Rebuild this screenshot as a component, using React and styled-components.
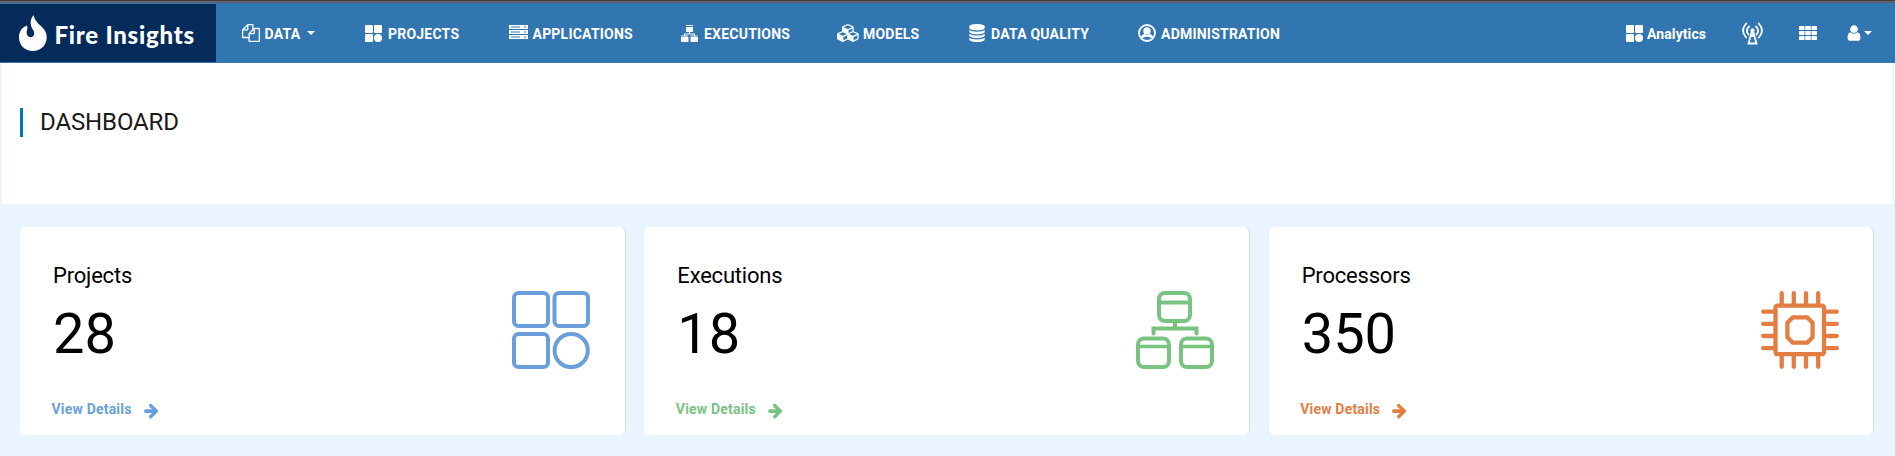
import React from 'react';
import styled, { createGlobalStyle } from 'styled-components';

const Global = createGlobalStyle`
  * { box-sizing: border-box; }
  body { margin: 0; background: #e9f4ff; font-family: Roboto, "Liberation Sans", sans-serif; color: #000; }
`;

const Page = styled.div`
  min-height: 456px;
  display: flex;
  flex-direction: column;
  border-top: 1px solid #3f3f42;
`;

const Navbar = styled.nav`
  height: 62px;
  flex: none;
  display: flex;
  align-items: stretch;
  background: #3276b1;
  border-top: 2px solid #656367;
`;

const Brand = styled.a`
  width: 216px;
  margin: 1px 0;
  padding-left: 19px;
  display: flex;
  align-items: center;
  gap: 7.5px;
  background: #052b5b;
  color: #fff;
`;

const BrandName = styled.span`
  padding-top: 3px;
  font: 900 24px/28px Lato, sans-serif;
  letter-spacing: 0.75px;
  white-space: nowrap;
`;

const Menu = styled.div`
  display: flex;
  align-items: center;
`;

const RightMenu = styled(Menu)`
  margin-left: auto;
  padding-right: 23px;
`;

const Item = styled.a`
  display: flex;
  align-items: center;
  margin-left: ${p => p.$before}px;
  gap: ${p => p.$gap ?? 6}px;
  height: 24px;
  color: #fff;
  font-size: 14px;
  font-weight: 700;
  line-height: 24px;
  white-space: nowrap;
  svg { flex: none; display: block; }
`;

const Label = styled.span`
  width: ${p => p.$w}px;
  padding-top: 2px;
  letter-spacing: ${p => p.$track ?? 0.22}px;
`;

const Caret = styled.i`
  border: 4.5px solid transparent;
  border-top: 4.5px solid #fff;
  border-bottom: 0;
  margin-left: ${p => p.$gap ?? 0}px;
`;

const Heading = styled.header`
  height: 141px;
  margin: 0 2px;
  padding: 45px 18px 0;
  background: #fff;
`;

const Title = styled.h1`
  margin: 0;
  height: 29px;
  padding-left: 17px;
  border-left: 3px solid #007bb8;
  font-size: 24px;
  line-height: 29px;
  font-weight: 400;
  letter-spacing: -0.12px;
  color: #1a1a1a;
`;

const Cards = styled.main`
  display: grid;
  grid-template-columns: repeat(3, 1fr);
  gap: 18.75px;
  padding: 23px 20.75px 20px 20px;
`;

const Card = styled.section`
  height: 208px;
  padding: 35px 34.5px 0 33px;
  display: flex;
  justify-content: space-between;
  background: #fff;
  border-radius: 6px;
  border-right: 1px solid #d9dde2;
`;

const Stats = styled.div`
  display: flex;
  flex-direction: column;
`;

const Name = styled.h2`
  margin: 0;
  font-size: 22px;
  line-height: 28px;
  font-weight: 400;
  letter-spacing: -0.2px;
`;

const Value = styled.div`
  margin-top: 11px;
  font-size: 56px;
  line-height: 66px;
`;

const Details = styled.a`
  margin: 30px 0 0 -1.5px;
  display: flex;
  align-items: center;
  gap: 11px;
  font-size: 14px;
  line-height: 24px;
  font-weight: 700;
  letter-spacing: 0.2px;
  color: ${p => p.$color};
  svg { margin-top: 2px; }
`;

const Art = styled.div`
  padding-top: 29px;
  color: ${p => p.$color};
  svg { display: block; }
`;

const Glyph = ({ d, w = 18, h = 18, box = '0 0 1792 1792' }) => (
  <svg width={w} height={h} viewBox={box} fill="currentColor"><path d={d} /></svg>
);

const FILES = 'M1696 384q40 0 68 28t28 68v1216q0 40-28 68t-68 28h-960q-40 0-68-28t-28-68v-288h-544q-40 0-68-28t-28-68v-672q0-40 20-88t48-76l408-408q28-28 76-48t88-20h416q40 0 68 28t28 68v328q68-40 128-40h416zm-544 213l-299 299h299v-299zm-640-384l-299 299h299v-299zm196 647l316-316v-416h-384v416q0 40-28 68t-68 28h-416v640h512v-256q0-40 20-88t48-76zm956 804v-1152h-384v416q0 40-28 68t-68 28h-416v640h896z';
const DISCS = 'M896 768q237 0 443-43t325-127v170q0 69-103 128t-280 93.5-385 34.5-385-34.5-280-93.5-103-128v-170q119 84 325 127t443 43zm0 768q237 0 443-43t325-127v170q0 69-103 128t-280 93.5-385 34.5-385-34.5-280-93.5-103-128v-170q119 84 325 127t443 43zm0-384q237 0 443-43t325-127v170q0 69-103 128t-280 93.5-385 34.5-385-34.5-280-93.5-103-128v-170q119 84 325 127t443 43zm0-1152q208 0 385 34.5t280 93.5 103 128v128q0 69-103 128t-280 93.5-385 34.5-385-34.5-280-93.5-103-128v-128q0-69 103-128t280-93.5 385-34.5z';
const CUBES = 'M640 1632l384-192v-314l-384 164v342zm-64-454l404-173-404-173-404 173zm1088 454l384-192v-314l-384 164v342zm-64-454l404-173-404-173-404 173zm-448-293l384-165v-266l-384 164v267zm-64-379l441-189-441-189-441 189zm1088 518v416q0 36-19 67t-52 47l-448 224q-25 14-57 14t-57-14l-448-224q-4-2-7-4-2 2-7 4l-448 224q-25 14-57 14t-57-14l-448-224q-33-16-52-47t-19-67v-416q0-38 21.5-70t56.5-48l434-186v-400q0-38 21.5-70t56.5-48l448-192q23-10 50-10t50 10l448 192q35 16 56.5 48t21.5 70v400l434 186q36 16 57 48t21 70z';
const USER = 'M1536 1399q0 109-62.5 187t-150.5 78h-854q-88 0-150.5-78t-62.5-187q0-85 8.5-160.5t31.5-152 58.5-131 94-89 134.5-34.5q131 128 313 128t313-128q76 0 134.5 34.5t94 89 58.5 131 31.5 152 8.5 160.5zm-256-887q0 159-112.5 271.5t-271.5 112.5-271.5-112.5-112.5-271.5 112.5-271.5 271.5-112.5 271.5 112.5 112.5 271.5z';
const ARROW = 'M1600 960q0 54-37 91l-651 651q-39 37-91 37-51 0-90-37l-75-75q-38-38-38-91t38-91l293-293h-704q-52 0-84.5-37.5t-32.5-90.5v-128q0-53 32.5-90.5t84.5-37.5h704l-293-294q-38-36-38-90t38-90l75-75q38-38 90-38 53 0 91 38l651 651q37 35 37 90z';

const Flame = () => (
  <svg width="28" height="36" viewBox="0 0 28 36" fill="#fff">
    <path d="M14.500 0C16 5.500 18.500 8 23 12C26 15 27.700 18 27.700 22.200C27.700 30.200 21.500 36 13.900 36C6 36 0 30.200 0 22.500C0 16.500 3.200 12 8 10.500C8.500 12.500 8.500 13.600 7.900 15.500C7 18.200 8.200 22.200 11.600 22.200C15.500 22.200 16 18 14.300 15.200C11 10.500 10.500 5 14.500 0Z" />
  </svg>
);

const Tiles = () => (
  <svg width="17" height="17" viewBox="0 0 17 17" fill="currentColor">
    <rect width="8" height="8" rx="1" /><rect x="9" width="8" height="8" rx="1" />
    <rect y="9" width="8" height="8" rx="1" /><circle cx="13" cy="13" r="4" />
  </svg>
);

const Servers = () => (
  <svg width="19" height="16" viewBox="0 0 19 16">
    {[0, 5, 10].map(y => (
      <g key={y}>
        <rect y={y} width="19" height="4" fill="#fff" />
        <path d={`M2 ${y + 2}H11M15 ${y + 2}h2`} stroke="#3276b1" />
      </g>
    ))}
  </svg>
);

const FlowSmall = () => (
  <svg width="17" height="17" viewBox="0 0 17 17" fill="currentColor">
    <path d="M5 0h7v1H5zM5 2h7v4.500l-.5.500h-6L5 6.500zM8 7h1v2H8zM3 8.500h11v2h-1v-1H4v1H3zM.5 10.500h6.500v1H0zM0 12h7.500v4.500l-.5.500H.5l-.5-.5zM10 10.500h6.500v1H9.500zM9.500 12H17v4.500l-.5.500H10l-.5-.5z" />
  </svg>
);

const Profile = () => (
  <svg width="18" height="18" viewBox="0 0 18 18">
    <circle cx="9" cy="9" r="8" fill="none" stroke="#fff" strokeWidth="1.800" />
    <circle cx="9" cy="6.900" r="3.700" fill="#fff" />
    <path d="M2.500 13C4 11 5 10.500 6.500 9.800Q9 12 11.500 9.800C13 10.500 14 11 15.500 13L14 14.200Q12 12.700 9 12.700T4 14.200Z" fill="#fff" />
  </svg>
);

const Tower = () => (
  <svg width="21" height="23" viewBox="0 0 21 23" fill="none" stroke="#fff" strokeWidth="1.800" strokeLinecap="round">
    <path d="M4.200 1.500Q-2.200 8.500 4.200 15.500M16.800 1.500Q23.200 8.500 16.800 15.500M7 4.500Q3 8.500 6.500 12.500M14 4.500Q18 8.500 14.500 12.500" />
    <circle cx="10.500" cy="8.200" r="2" fill="#fff" stroke="none" />
    <path d="M9.900 9L6.500 21.500H14.500L11.100 9V14H9.900" />
  </svg>
);

const Grid = () => (
  <svg width="18" height="14" viewBox="0 0 18 14" fill="currentColor">
    {[0, 5, 10].flatMap(y => [0, 6.25, 12.5].map(x => <rect key={`${x}-${y}`} x={x} y={y} width="5.500" height="4" rx=".5" />))}
  </svg>
);

const TilesArt = () => (
  <svg width="78" height="78" viewBox="0 0 78 78" fill="none" stroke="currentColor" strokeWidth="4">
    <rect x="2" y="2" width="34" height="33" rx="4.500" /><rect x="42.500" y="2" width="33.500" height="33" rx="4.500" />
    <rect x="2" y="43" width="34" height="33" rx="4.500" /><circle cx="59.200" cy="59.500" r="16.600" />
  </svg>
);

const FlowArt = () => (
  <svg width="78" height="78" viewBox="0 0 78 78" fill="none" stroke="currentColor" strokeWidth="4">
    <rect x="23" y="2" width="31" height="28" rx="6" /><path d="M23 11.500H54M39 30v7.500" />
    <path d="M17.500 42.500V37.500H60.500V42.500" strokeLinecap="round" />
    <rect x="2" y="47.500" width="31" height="28.500" rx="6" /><path d="M2 55.500H33" strokeWidth="3.500" />
    <rect x="45" y="47.500" width="31" height="28.500" rx="6" /><path d="M45 55.500H76" strokeWidth="3.500" />
  </svg>
);

const ChipArt = () => (
  <svg width="78" height="78" viewBox="0 0 78 78" fill="none" stroke="currentColor" strokeWidth="4.300" strokeLinecap="round" strokeLinejoin="round">
    <rect x="14.500" y="14.700" width="48.500" height="48.500" rx="2" />
    <path d="M31.800 26.300H46.200L51.600 31.700V46.300L46.200 51.700H31.800L26.400 46.300V31.700Z" />
    {[20.700, 32.800, 45, 57.200].map(p => <path key={p} d={`M${p} 2.200V13M${p} 65V75.800M2.200 ${p}H13M65 ${p}H75.800`} />)}
  </svg>
);

const metrics = [
  { name: 'Projects', value: 28, color: '#6a9fd9', art: <TilesArt /> },
  { name: 'Executions', value: 18, color: '#79c381', art: <FlowArt /> },
  { name: 'Processors', value: 350, color: '#e27e43', art: <ChipArt /> },
];

export default function App() {
  return (
    <Page>
      <Global />
      <Navbar>
        <Brand><Flame /><BrandName>Fire Insights</BrandName></Brand>
        <Menu>
          <Item $before={26} $gap={4.5}><Glyph d={FILES} /><Label $w={36.5}>DATA</Label><Caret $gap={1} /></Item>
          <Item $before={50.5}><Tiles /><Label $w={72}>PROJECTS</Label></Item>
          <Item $before={48.5} $gap={5}><Servers /><Label $w={101}>APPLICATIONS</Label></Item>
          <Item $before={47.5}><FlowSmall /><Label $w={87}>EXECUTIONS</Label></Item>
          <Item $before={46} $gap={3}><Glyph d={CUBES} w={23} h={18} box="0 0 2304 1792" /><Label $w={57}>MODELS</Label></Item>
          <Item $before={48} $gap={5}><Glyph d={DISCS} /><Label $w={98}>DATA QUALITY</Label></Item>
          <Item $before={49} $gap={5}><Profile /><Label $w={120}>ADMINISTRATION</Label></Item>
        </Menu>
        <RightMenu>
          <Item $before={0} $gap={4}><Tiles /><Label $w={60} $track={0.1}>Analytics</Label></Item>
          <Item $before={35}><Tower /></Item>
          <Item $before={36}><Grid /></Item>
          <Item $before={28} $gap={1}><Glyph d={USER} /><Caret /></Item>
        </RightMenu>
      </Navbar>
      <Heading><Title>DASHBOARD</Title></Heading>
      <Cards>
        {metrics.map(m => (
          <Card key={m.name}>
            <Stats>
              <Name>{m.name}</Name>
              <Value>{m.value}</Value>
              <Details $color={m.color}>View Details<Glyph d={ARROW} w={17} h={17} /></Details>
            </Stats>
            <Art $color={m.color}>{m.art}</Art>
          </Card>
        ))}
      </Cards>
    </Page>
  );
}
